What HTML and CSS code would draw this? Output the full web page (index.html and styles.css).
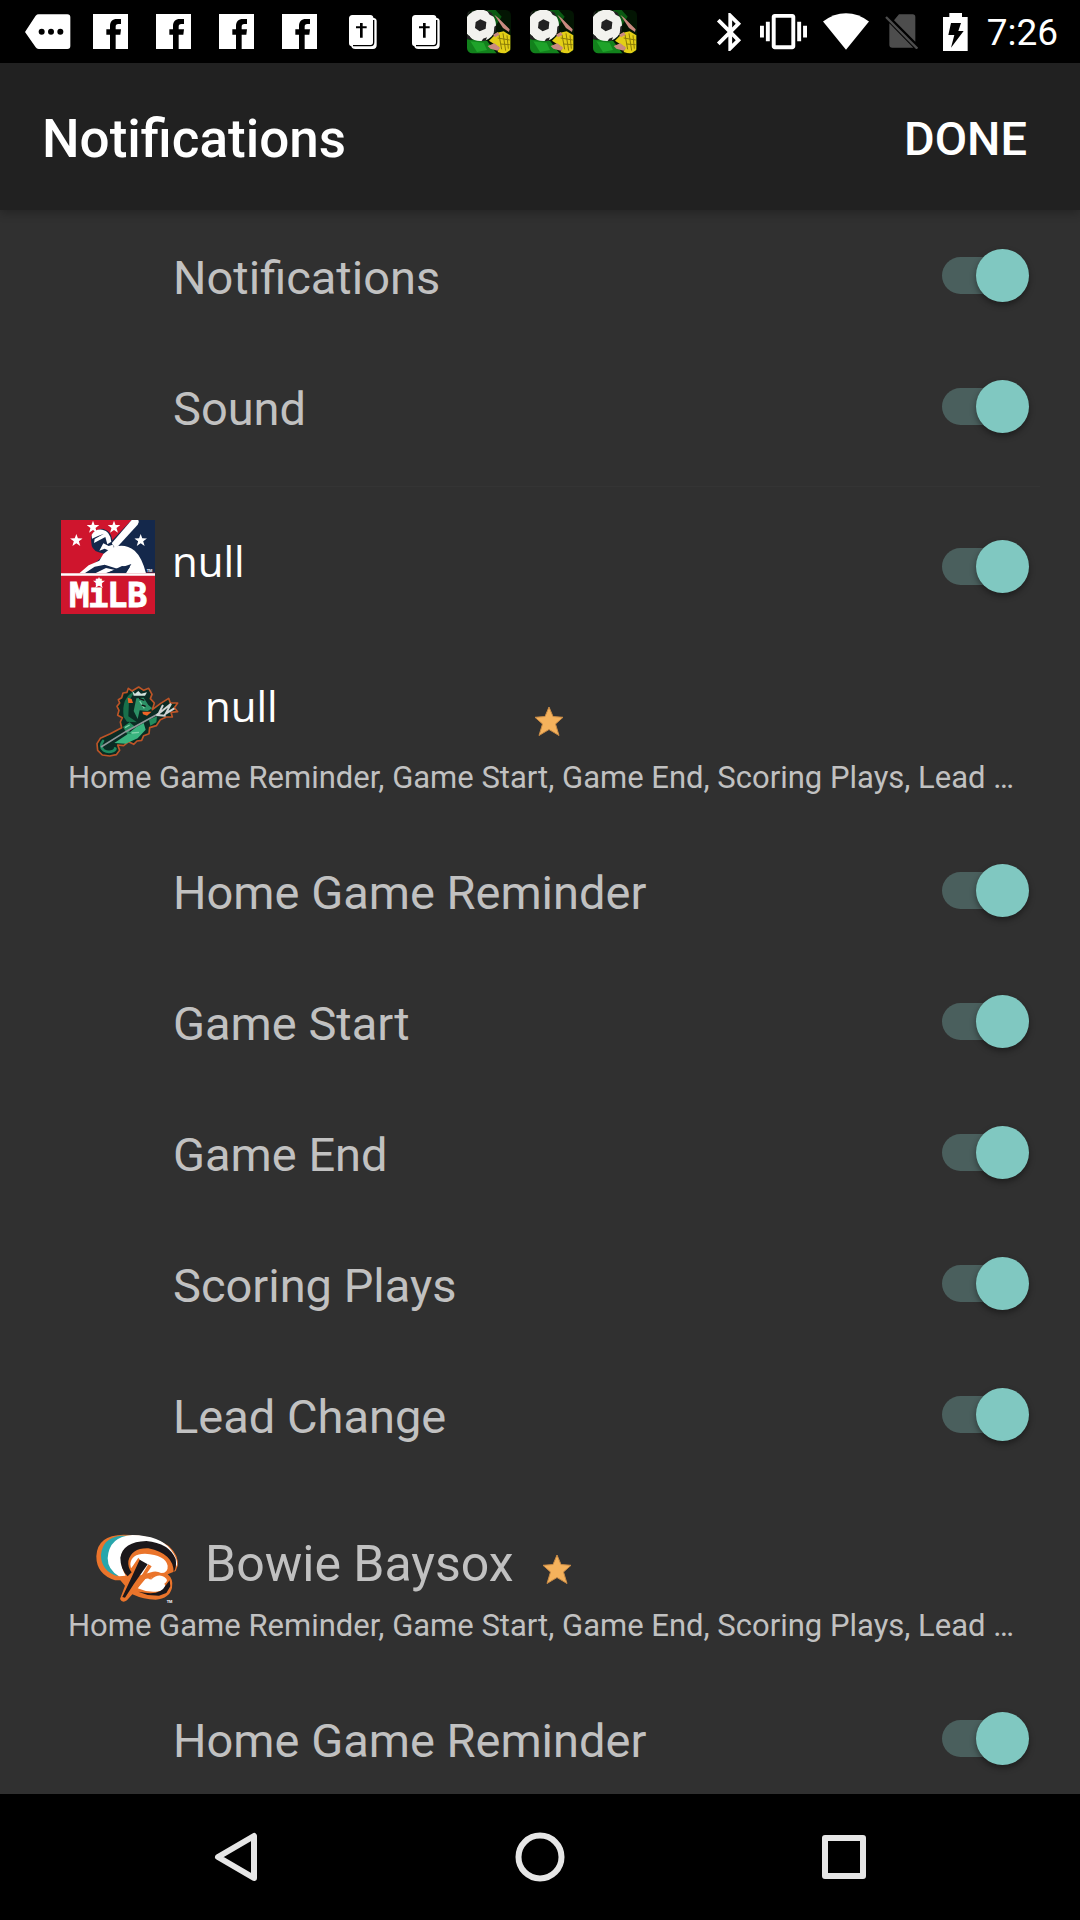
FILE: index.html
```html
<!DOCTYPE html>
<html lang="en">
<head>
<meta charset="utf-8">
<meta name="viewport" content="width=device-width, initial-scale=1">
<title>Notifications</title>
<link rel="stylesheet" href="styles.css">
</head>
<body>
<svg class="defs" aria-hidden="true">
  <symbol id="facebook" viewBox="0 0 105 105">
    <path fill="#fff" d="M0 0h105v105H0z"/>
    <path fill="#000" d="M51 105V62H40V46h11V36c0-14 8-21 20-21h13v15h-8c-6 0-8 3-8 8v8h16l-2 16H68v43z"/>
  </symbol>
  <symbol id="bible" viewBox="0 0 84 102">
    <path fill="#fff" d="M10 0h54c6 0 8 3 9 8 6 1 10 4 10 10v73c0 7-4 11-11 11H19C11 102 9 100 7 94 2 92 0 90 0 84V10C0 4 4 0 10 0z"/>
    <path fill="none" stroke="#000" stroke-width="4" d="M74 15v67c0 7-3 10-9 10H12"/>
    <path fill="#000" d="M33 24h8v10h12v6H41v28h-8V40H21v-6h12z"/>
  </symbol>
  <symbol id="soccer" viewBox="0 0 132 132">
    <clipPath id="soccer-clip"><rect width="132" height="130" rx="16"/></clipPath>
    <g clip-path="url(#soccer-clip)">
      <path fill="#031503" d="M0 0h132v132H0z"/>
      <path fill="#0a5a12" d="M60 0h26l18 20-20 30z"/>
      <path fill="#12811c" d="M0 88l60 4 30 40H0z"/>
      <path fill="#1fa32a" d="M10 94l40 4 10 22-30 6z"/>
      <path fill="#e3cf17" d="M66 92l24-24 20-4 20 12v44l-18 12-20-6 4-14z"/>
      <path stroke="#8b7c08" stroke-width="3" fill="none" d="M96 74l8 44M108 70l8 52M120 76l4 40M92 84l36 6M100 102l28 2"/>
      <path fill="#c98a80" d="M82 14l12 10 34 34-2 8-18-12zM62 108l20-8 18 14-8 8-22-6zM78 74l14-8 6 8-14 8z"/>
      <circle cx="40" cy="46" r="47" fill="#f2f2ee"/>
      <path fill="#222" d="M26 36l14-8 18 8-2 20-18 8-14-10zM0 6l10-2-8 14zM60 2l14 6 6 12-12-6zM82 50l6-4-2 20-6 6zM0 74l8 4 6 12-14-4zM48 86l12-4-4 10-12 2z"/>
    </g>
  </symbol>
  <symbol id="star" viewBox="0 0 30 30">
    <path fill="#f5b25c" stroke="#c88a45" stroke-width="1" stroke-linejoin="round" d="M15 1l4 9.500 10 .8-7.500 6.700 3.500 11.500-10-6-10 6 3.500-11.500L1 11.300l10-.8z"/>
  </symbol>
  <symbol id="mini-star" viewBox="-10 -10 20 20">
    <path fill="#fff" d="M0-10l2.500 6.800 7.500.2-6 4.400L6.200 9 0 4.800-6.200 9-4 1.400-10-3l7.500-.2z"/>
  </symbol>
</svg>

<header class="status-bar">
  <div class="status-left">
    <span class="status-cell"><svg width="46" height="36" viewBox="0 0 138 108"><path fill="#fff" d="M0 54L32 5q4-4 9-4h86q9 0 9 9v86q0 9-9 9H41q-6 0-9-5z"/><circle cx="50" cy="53" r="9"/><circle cx="78" cy="53" r="9"/><circle cx="106" cy="53" r="9"/></svg></span>
    <span class="status-cell"><svg width="35" height="35"><use href="#facebook"/></svg></span>
    <span class="status-cell"><svg width="35" height="35"><use href="#facebook"/></svg></span>
    <span class="status-cell"><svg width="35" height="35"><use href="#facebook"/></svg></span>
    <span class="status-cell"><svg width="35" height="35"><use href="#facebook"/></svg></span>
    <span class="status-cell"><svg width="28" height="34"><use href="#bible"/></svg></span>
    <span class="status-cell"><svg width="28" height="34"><use href="#bible"/></svg></span>
    <span class="status-cell"><svg width="44" height="44"><use href="#soccer"/></svg></span>
    <span class="status-cell"><svg width="44" height="44"><use href="#soccer"/></svg></span>
    <span class="status-cell"><svg width="44" height="44"><use href="#soccer"/></svg></span>
  </div>
  <div class="status-right">
    <svg width="28" height="38" viewBox="4.500 2 14.740 20"><path fill="#fff" d="M17.710 7.710L12 2h-1v7.590L6.410 5 5 6.410 10.590 12 5 17.590 6.410 19 11 14.410V22h1l5.710-5.710-4.300-4.290 4.300-4.290zM13 5.830l1.880 1.880L13 9.590V5.830zm1.880 10.460L13 18.170v-3.760l1.880 1.880z"/></svg>
    <svg width="47" height="47" viewBox="0 0 24 24"><path fill="#fff" d="M0 15h2V9H0v6zm3 2h2V7H3v10zm19-8v6h2V9h-2zm-3 8h2V7h-2v10zM16.500 3h-9C6.670 3 6 3.670 6 4.500v15c0 .83.67 1.500 1.500 1.500h9c.83 0 1.500-.67 1.500-1.500v-15c0-.83-.67-1.500-1.500-1.500zM16 19H8V5h8v14z"/></svg>
    <svg width="46" height="37" viewBox="0 0 138 110"><path fill="#fff" d="M0 25Q32 0 69 0t69 25L69 110z"/></svg>
    <svg width="42" height="35" viewBox="0 0 126 105"><path fill="#4d4d4d" d="M42 1h41q8 0 8 8v74L27 19zM13 28l72 73H22q-9 0-9-9z"/><path stroke="#4d4d4d" stroke-width="7" d="M3 9l94 95"/></svg>
    <svg width="28" height="38" viewBox="0 0 84 114"><path fill="#fff" d="M19 0h38v12h17v102H0V12h19z"/><path d="M24 30h30l-8 24h16L24 104l10-38H16z"/></svg>
    <time class="clock">7:26</time>
  </div>
</header>

<div class="app-bar">
  <h1 class="app-title">Notifications</h1>
  <button class="done" type="button">DONE</button>
</div>

<main class="content">
  <label class="row"><span class="row-label">Notifications</span><input class="switch" type="checkbox" checked></label>
  <label class="row"><span class="row-label">Sound</span><input class="switch" type="checkbox" checked></label>
  <hr class="divider">
  <label class="row league">
    <svg class="league-logo" viewBox="63 60 282 282" aria-hidden="true">
      <path fill="#cf152d" d="M63 60h282v282H63z"/>
      <path fill="#14284b" d="M275 60h70v158H130l60-50 10-30z"/>
      <path fill="#fff" d="M215 130l60-70h20q4 6-2 14l-66 72z"/>
      <path fill="#14284b" d="M154 128q-6-36 32-42 34 6 30 48l-6 16-16 12-20-6q-20-8-20-28z"/>
      <path fill="#fff" d="M155 104q10-18 32-15 24 4 27 36l-12 8-6-22-34 18 2-12 28-16q-18 6-36 15zM190 130l16 8 12-4 4 8-14 10-14-6-16 6z"/>
      <path fill="#fff" d="M208 148q40-24 76 4 22 20 34 68H256l14-20-24-2-46 22h-82l28-24 32-14 12-20z"/>
      <path fill="#14284b" d="M194 194l38 12 42-14-16 28h-62l30-10-28-6-32 16h-32l30-20z"/>
      <path fill="#fff" d="M63 220h282v7H63z"/>
      <use href="#mini-star" x="90" y="102" width="38" height="38"/>
      <use href="#mini-star" x="140" y="62" width="38" height="38"/>
      <use href="#mini-star" x="203" y="62" width="38" height="38"/>
      <use href="#mini-star" x="283" y="102" width="38" height="38"/>
      <text class="league-text" x="88 145 202 262" y="322">MiLB</text>
      <use href="#mini-star" x="159" y="230" width="36" height="36"/>
      <text class="mark-text" x="320" y="216">TM</text>
    </svg>
    <span class="league-name">null</span>
    <input class="switch" type="checkbox" checked>
  </label>

  <section>
    <header class="team">
      <div class="team-line">
        <svg class="team-logo" viewBox="47 44 252 216" aria-hidden="true">
          <path fill="#0b2b23" stroke="#bd5427" stroke-width="5" stroke-linejoin="round" d="M155 62L175 50 190 60 205 54 215 72 210 85 222 98 216 118 240 100 265 84 270 98 292 98 282 112 292 124 272 126 276 140 258 140 240 148 228 166 208 172 206 190 190 196 184 210 170 212 160 222 145 214 130 226 112 224 118 240 108 253 88 257 66 254 52 240 50 220 60 204 90 190 124 172 120 155 126 142 112 135 116 120 110 108 118 98 114 88 124 82 128 68 140 66 144 54z"/>
          <path fill="#18704a" d="M130 140q-8-60 34-78l-18 30-2 46 26 18-30-2z"/>
          <path fill="#2c9166" d="M168 84l22-2 14 22 12 10-14 8-24-2-6 26-12-24z"/>
          <path fill="#39b47f" d="M190 158l6 20-24 26-36 16-34-2 36-24 30-24z"/>
          <path fill="#238c5d" d="M128 170l20-14 14 12-16 14 8 10-14-2zM206 148l24-10-2 18-18 10z"/>
          <path fill="none" stroke="#7fd2aa" stroke-width="4" d="M154 188l22-2M178 92l14 22M134 172l14-8"/>
          <path fill="none" stroke="#1f8a60" stroke-width="8" stroke-linecap="round" d="M68 212q-12 16 2 28 14 8 28 2 10-6 6-8"/>
          <path fill="none" stroke="#8f979a" stroke-width="5" d="M62 230l74-46 98-54"/>
          <path fill="none" stroke="#d0d5d5" stroke-width="6" d="M234 132l14-28M230 134l42-34-16 30 26-16M228 134l28 2"/>
          <path fill="#ee6426" d="M142 82l12 4 4 12-14 0zM186 124l28 0-14 12-12-4z"/>
          <path fill="#d3e2dc" d="M156 62l8 8 10-8 8 8 18-4-6 10h-34z"/>
          <path stroke="#111" stroke-width="4" d="M176 84l16 6M184 104l12 4"/>
        </svg>
        <h2 class="team-name unnamed">null</h2>
        <svg class="favorite" role="img" aria-label="Favorite"><use href="#star"/></svg>
      </div>
      <p class="summary">Home Game Reminder, Game Start, Game End, Scoring Plays, Lead …</p>
    </header>
    <label class="row"><span class="row-label">Home Game Reminder</span><input class="switch" type="checkbox" checked></label>
    <label class="row"><span class="row-label">Game Start</span><input class="switch" type="checkbox" checked></label>
    <label class="row"><span class="row-label">Game End</span><input class="switch" type="checkbox" checked></label>
    <label class="row"><span class="row-label">Scoring Plays</span><input class="switch" type="checkbox" checked></label>
    <label class="row"><span class="row-label">Lead Change</span><input class="switch" type="checkbox" checked></label>
  </section>

  <section>
    <header class="team">
      <div class="team-line">
        <svg class="team-logo" viewBox="47 42 252 216" aria-hidden="true">
          <path fill="#ea742b" d="M48 112Q50 48 130 47 220 48 266 82 296 110 292 140L286 156 262 166Q280 180 275 206 268 238 226 242 190 242 156 226L140 244Q126 254 119 240L134 200 120 184 104 184Q48 166 48 112z"/>
          <path fill="#28a6ac" d="M62 108q4-52 60-58l30 0-54 60 14 62q-50-16-50-64z"/>
          <path fill="#fff" d="M82 118q4-66 74-70 84 2 116 44 22 28 18 52l-10-24q-24-44-88-48-62 0-70 42-2 28 14 56l-20 2q-34-20-34-54z"/>
          <path fill="#1b171b" d="M120 116q8-48 78-50 68 6 88 54 4 24-6 40 0-56-76-72-50-2-60 38-2 20 10 34l-12 12q-22-22-22-56z"/>
          <path fill="#fff" d="M150 136q2-32 44-32 62 4 68 36 2 22-20 22-10-6-24-4l-44 12 14-36-14-18-16 24-6 8z"/>
          <path fill="#fff" d="M192 184q14-20 22-16l-2 14q22-20 40-8 16 10 0 20 12 20-26 24-28 2-54-10z"/>
          <path fill="#1b171b" d="M178 122l24 14-42 60-26 40-8-2 30-64zM268 184l2 18-12 20-22 8-34-2-28-10q66 14 80-16z"/>
          <path fill="#ea742b" d="M204 136l10 6-20 30 30-12q-8 10-14 22-10-8-24 4l-18 28-10-2z"/>
          <text class="mark-text" x="259" y="252">TM</text>
        </svg>
        <h2 class="team-name">Bowie Baysox</h2>
        <svg class="favorite" role="img" aria-label="Favorite"><use href="#star"/></svg>
      </div>
      <p class="summary">Home Game Reminder, Game Start, Game End, Scoring Plays, Lead …</p>
    </header>
    <label class="row"><span class="row-label">Home Game Reminder</span><input class="switch" type="checkbox" checked></label>
  </section>
</main>

<nav class="nav-bar">
  <button class="nav-button" type="button" aria-label="Back"><svg width="50" height="50" viewBox="0 0 50 50"><path d="M43 4v42L7 25z"/></svg></button>
  <button class="nav-button" type="button" aria-label="Home"><svg width="50" height="50" viewBox="0 0 50 50"><circle cx="25" cy="25" r="21.500"/></svg></button>
  <button class="nav-button" type="button" aria-label="Recent apps"><svg width="50" height="50" viewBox="0 0 50 50"><path d="M6 6h38v38H6z"/></svg></button>
</nav>
</body>
</html>
```

FILE: styles.css
```css
* {
  box-sizing: border-box;
}

body {
  margin: 0;
  height: 100vh;
  display: flex;
  flex-direction: column;
  background: #303030;
  color: #c1c1c1;
  font-family: Roboto, sans-serif;
  font-size: 47px;
}

svg {
  display: block;
  flex: none;
}

h1,
h2,
p {
  margin: 0;
}

button {
  padding: 0;
  border: 0;
  background: none;
  color: inherit;
  font: inherit;
}

.defs {
  position: absolute;
  width: 0;
  height: 0;
}

/* Status bar */
.status-bar {
  flex: none;
  display: flex;
  justify-content: space-between;
  align-items: center;
  height: 63px;
  padding: 0 22px 0 16px;
  background: #000;
}

.status-left {
  display: flex;
}

.status-cell {
  width: 63px;
  display: flex;
  justify-content: center;
  align-items: center;
}

.status-right {
  display: flex;
  align-items: center;
  gap: 16px;
}

.clock {
  padding-top: 2px;
  color: #fff;
  font-size: 37px;
  font-weight: 400;
  line-height: 44px;
}

/* App bar */
.app-bar {
  flex: none;
  position: relative;
  display: flex;
  justify-content: space-between;
  align-items: center;
  height: 147px;
  padding: 4px 53px 0 42px;
  background: #212121;
  color: #fff;
  box-shadow: 0 2px 10px rgba(0, 0, 0, 0.3);
}

.app-title {
  font-size: 53px;
  font-weight: 500;
}

.app-bar .done {
  font-weight: 500;
}

/* Settings list */
.content {
  flex: 1;
  min-height: 0;
  overflow-y: auto;
  scrollbar-width: none;
}

.row {
  display: flex;
  justify-content: space-between;
  align-items: center;
  height: 131px;
  padding: 0 51px 0 173px;
}

.row-label {
  padding-top: 4px;
}

.switch {
  appearance: none;
  flex: none;
  display: grid;
  align-items: center;
  width: 87px;
  height: 53px;
  margin: 0;
}

.switch::before,
.switch::after {
  content: "";
  grid-area: 1 / 1;
}

.switch::before {
  width: 76px;
  height: 37px;
  border-radius: 19px;
  background: #4a5f5d;
}

.switch::after {
  justify-self: end;
  width: 53px;
  height: 53px;
  border-radius: 50%;
  background: #80c8c1;
  box-shadow: 0 3px 6px rgba(0, 0, 0, 0.4);
}

.divider {
  height: 1px;
  margin: 14px 40px;
  border: 0;
  background: #343434;
}

.league {
  padding-left: 61px;
}

.league-logo {
  width: 94px;
  height: 94px;
  overflow: visible;
}

.league-text {
  fill: #fff;
  stroke: #fff;
  stroke-width: 3px;
  font: bold 100px "DejaVu Sans Mono", monospace;
}

.mark-text {
  fill: #fff;
  font: bold 12px "Liberation Sans", sans-serif;
}

.league-name {
  flex: 1;
  padding: 0 0 12px 17px;
  color: #fff;
  font-family: "Open Sans", sans-serif;
  font-size: 42px;
}

/* Team heading */
.team {
  padding: 53px 51px 28px 68px;
}

.team-line {
  display: flex;
  align-items: center;
  height: 72px;
  padding-left: 28px;
}

.team-logo {
  width: 84px;
  height: 72px;
  overflow: visible;
}

.team-name {
  min-width: 301px;
  margin: 0 28px 0 25px;
  padding-bottom: 10px;
  font-size: 50px;
  font-weight: 400;
}

.team-name.unnamed {
  padding-bottom: 32px;
  color: #fff;
  font-family: "Open Sans", sans-serif;
  font-size: 42px;
}

.favorite {
  width: 30px;
  height: 30px;
}

.summary {
  font-size: 31px;
  line-height: 42px;
  margin-bottom: -2px;
  white-space: nowrap;
}

/* System navigation */
.nav-bar {
  flex: none;
  display: flex;
  justify-content: center;
  height: 126px;
  background: #000;
}

.nav-button {
  width: 304px;
  display: flex;
  justify-content: center;
  align-items: center;
}

.nav-button svg {
  fill: none;
  stroke: #e6e6e6;
  stroke-width: 6;
  stroke-linejoin: round;
}
```
